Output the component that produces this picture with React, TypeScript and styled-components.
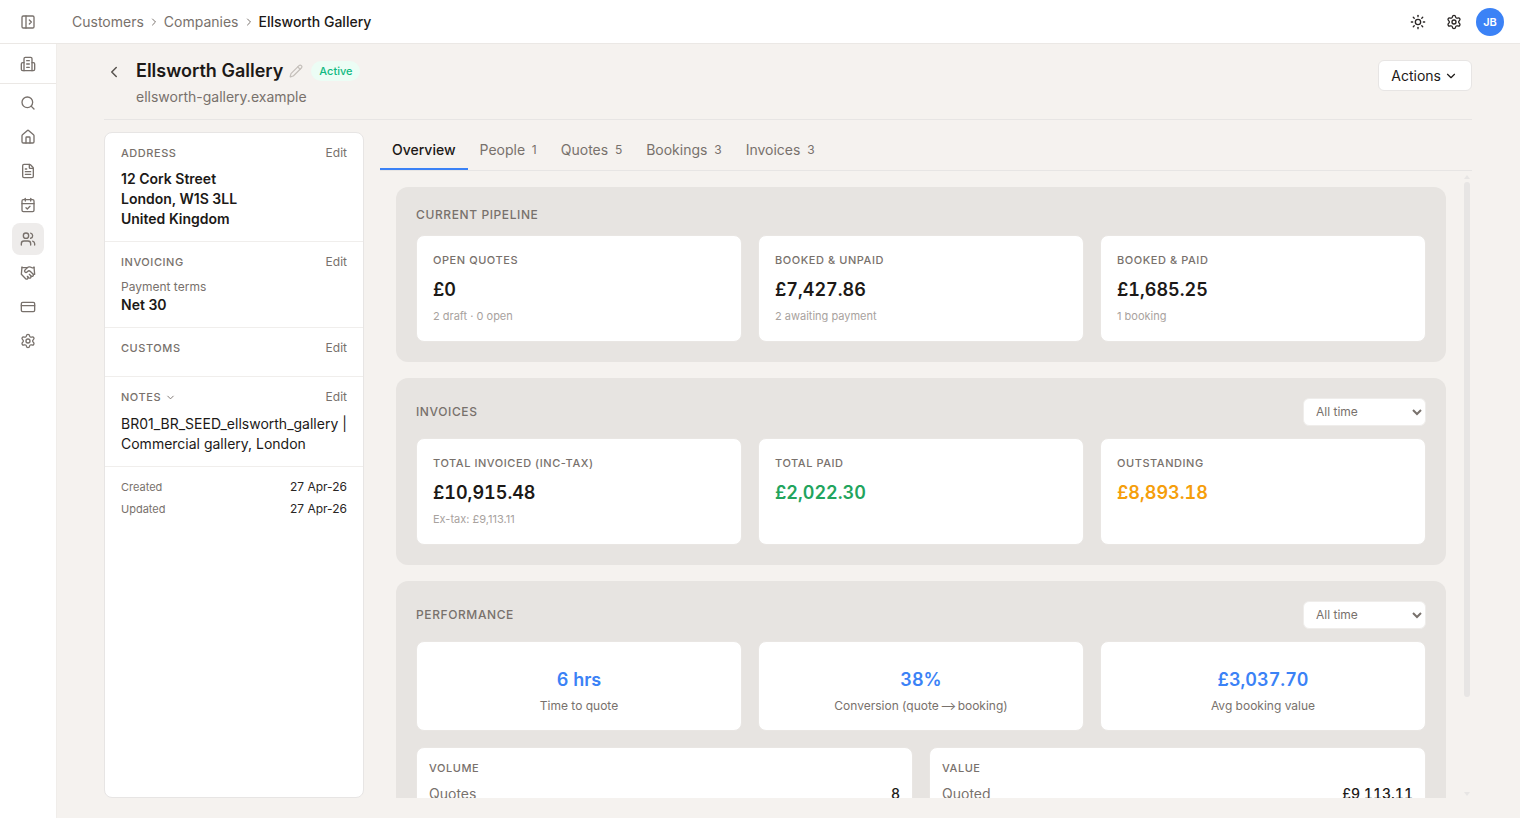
import React from 'react';
import styled, { createGlobalStyle } from 'styled-components';
import {
  CalendarCheck,
  ChevronDown,
  ChevronLeft,
  ChevronRight,
  CreditCard,
  FileText,
  Handshake,
  House,
  PanelLeftOpen,
  Pencil,
  Search,
  Settings,
  Sun,
  Users,
} from 'lucide-react';

const GlobalStyle = createGlobalStyle`
  html, body, #root {
    margin: 0;
    height: 100%;
  }
  body {
    font-family: Inter, "Liberation Sans", sans-serif;
    background: #f5f2ef;
    color: #1c1917;
    overflow: hidden;
  }
  * {
    box-sizing: border-box;
  }
`;

const Page = styled.div`
  display: flex;
  flex-direction: column;
  width: 1520px;
  height: 818px;
`;

const TopBar = styled.header`
  display: flex;
  align-items: center;
  flex: 0 0 44px;
  background: #fff;
  border-bottom: 1px solid #ebe8e5;
  padding-right: 16px;
`;

const ToggleSlot = styled.div`
  display: flex;
  align-items: center;
  justify-content: center;
  width: 56px;
  color: #78716c;
`;

const Crumbs = styled.nav`
  display: flex;
  align-items: center;
  gap: 4px;
  margin-left: 16px;
  font-size: 14px;
  color: #78716c;
  flex: 1;
`;

const CrumbSep = styled.span`
  display: flex;
  color: #78716c;
`;

const CrumbCurrent = styled.span`
  color: #1c1917;
  font-weight: 500;
`;

const TopActions = styled.div`
  display: flex;
  align-items: center;
  gap: 20px;
  color: #292524;
`;

const Avatar = styled.div`
  display: flex;
  align-items: center;
  justify-content: center;
  width: 28px;
  height: 28px;
  margin-left: -6px;
  border-radius: 50%;
  background: #3b82f6;
  color: #fff;
  font-size: 11px;
  font-weight: 600;
`;

const Body = styled.div`
  display: flex;
  flex: 1;
  min-height: 0;
`;

const Sidebar = styled.aside`
  display: flex;
  flex-direction: column;
  align-items: center;
  width: 57px;
  background: #fff;
  border-right: 1px solid #f0edea;
  color: #78716c;
`;

const BrandSlot = styled.div`
  display: flex;
  align-items: center;
  justify-content: center;
  width: 100%;
  height: 40px;
  border-bottom: 1px solid #ebe8e5;
  margin-bottom: 1px;
`;

const NavItem = styled.div<{ $active?: boolean }>`
  display: flex;
  align-items: center;
  justify-content: center;
  width: 32px;
  height: 32px;
  margin-top: 2px;
  border-radius: 8px;
  background: ${(p) => (p.$active ? '#eeeceb' : 'transparent')};
`;

const Main = styled.main`
  display: flex;
  flex-direction: column;
  flex: 1;
  min-width: 0;
  padding: 0 48px 20px 47px;
`;

const Header = styled.div`
  display: flex;
  justify-content: space-between;
  align-items: flex-start;
  height: 76px;
  flex: 0 0 76px;
  border-bottom: 1px solid #e7e5e4;
  margin-bottom: 12px;
  padding-top: 17px;
`;

const HeaderLeft = styled.div`
  display: flex;
  align-items: flex-start;
`;

const BackSlot = styled.div`
  display: flex;
  width: 32px;
  padding: 2px 0 0 1px;
  color: #57534e;
`;

const TitleRow = styled.div`
  display: flex;
  align-items: center;
  height: 20px;
`;

const Title = styled.h1`
  margin: 0;
  font-size: 18px;
  font-weight: 600;
  line-height: 20px;
`;

const EditPencil = styled.span`
  display: flex;
  margin-left: 6px;
  color: #c4bfba;
`;

const StatusBadge = styled.span`
  margin-left: 8px;
  padding: 2px 8px;
  border-radius: 10px;
  background: #ecfdf5;
  color: #10b981;
  font-size: 11px;
  font-weight: 500;
  line-height: 16px;
`;

const Domain = styled.div`
  margin-top: 6px;
  font-size: 14px;
  line-height: 20px;
  color: #78716c;
`;

const ActionsButton = styled.button`
  display: flex;
  align-items: center;
  gap: 3px;
  height: 31px;
  margin-top: -1px;
  padding: 0 13px 0 12px;
  border: 1px solid #e7e5e4;
  border-radius: 6px;
  background: #fff;
  color: #1c1917;
  font: 400 14px Inter, sans-serif;
`;

const Columns = styled.div`
  display: flex;
  gap: 16px;
  flex: 1;
  min-height: 0;
`;

const InfoCard = styled.section`
  flex: 0 0 260px;
  background: #fff;
  border: 1px solid #e7e5e4;
  border-radius: 8px;
  overflow: hidden;
`;

const InfoBlock = styled.div<{ $h: number }>`
  height: ${(p) => p.$h}px;
  padding: 13px 16px 0;
  border-bottom: 1px solid #f0eeec;
`;

const InfoHead = styled.div`
  display: flex;
  justify-content: space-between;
  align-items: center;
  height: 14px;
`;

const InfoLabel = styled.span`
  display: flex;
  align-items: center;
  gap: 4px;
  font-size: 11px;
  font-weight: 500;
  letter-spacing: 0.55px;
  color: #78716c;
`;

const EditLink = styled.span`
  margin-top: -2px;
  font-size: 12px;
  color: #78716c;
`;

const Address = styled.div`
  margin-top: 9px;
  font-size: 14px;
  font-weight: 600;
  line-height: 20px;
`;

const TermLabel = styled.div`
  margin-top: 10px;
  font-size: 12px;
  line-height: 16px;
  color: #78716c;
`;

const TermValue = styled.div`
  margin-top: 1px;
  font-size: 14px;
  font-weight: 600;
  line-height: 18px;
`;

const NoteText = styled.div`
  margin-top: 10px;
  font-size: 14px;
  line-height: 20px;
`;

const MetaBlock = styled.div`
  display: flex;
  flex-direction: column;
  gap: 6px;
  padding: 12px 16px;
`;

const MetaRow = styled.div`
  display: flex;
  justify-content: space-between;
  align-items: center;
  height: 16px;
  font-size: 12px;
  color: #292524;
`;

const MetaLabel = styled.span`
  font-size: 11px;
  color: #78716c;
`;

const MetaValue = styled.span`
  margin-top: -2px;
`;

const RightColumn = styled.div`
  position: relative;
  display: flex;
  flex-direction: column;
  flex: 1;
  min-width: 0;
`;

const Tabs = styled.div`
  display: flex;
  flex: 0 0 39px;
  height: 39px;
  border-bottom: 1px solid #e7e5e4;
`;

const Tab = styled.div<{ $active?: boolean }>`
  display: flex;
  align-items: center;
  gap: 6.75px;
  height: 38px;
  padding: 0 12px 2px;
  font-size: 14px;
  font-weight: ${(p) => (p.$active ? 500 : 400)};
  color: ${(p) => (p.$active ? '#1c1917' : '#78716c')};
  border-bottom: 2px solid ${(p) => (p.$active ? '#3b82f6' : 'transparent')};
`;

const TabCount = styled.span`
  font-size: 12px;
  color: #78716c;
`;

const ScrollArea = styled.div`
  display: flex;
  flex-direction: column;
  gap: 16px;
  flex: 1;
  min-height: 0;
  overflow: hidden;
  padding: 16px 26px 0 16px;
`;

const ScrollThumb = styled.div`
  position: absolute;
  right: 2px;
  top: 50px;
  width: 6px;
  height: 515px;
  border-radius: 3px;
  background: #e7e5e4;
`;

const ScrollArrow = styled.div<{ $up?: boolean }>`
  position: absolute;
  right: 2px;
  ${(p) => (p.$up ? 'top: 43px;' : 'bottom: 2px;')}
  width: 0;
  height: 0;
  border-left: 3px solid transparent;
  border-right: 3px solid transparent;
  border-${(p) => (p.$up ? 'bottom' : 'top')}: 4px solid #e7e5e4;
`;

const Panel = styled.section`
  flex: none;
  padding: 20px;
  border-radius: 12px;
  background: #e7e4e1;
`;

const PanelHead = styled.div`
  display: flex;
  justify-content: space-between;
  align-items: center;
  min-height: 16px;
  margin-bottom: 12px;
`;

const PanelTitle = styled.h2`
  margin: -2px 0 0;
  font-size: 12px;
  font-weight: 500;
  letter-spacing: 0.6px;
  color: #78716c;
`;

const RangeSelect = styled.select`
  width: 123px;
  height: 28px;
  padding: 0 8px 2px;
  border: 1px solid #efedeb;
  border-radius: 6px;
  background: #fff;
  color: #78716c;
  font: 400 12px Inter, sans-serif;
`;

const CardGrid = styled.div`
  display: grid;
  grid-template-columns: repeat(3, 1fr);
  gap: 16px;
`;

const StatCard = styled.div`
  height: 107px;
  padding: 16px 16px 0;
  border: 1px solid #e9e6e3;
  border-radius: 8px;
  background: #fff;
`;

const StatLabel = styled.div`
  font-size: 11px;
  font-weight: 500;
  letter-spacing: 0.55px;
  line-height: 16px;
  color: #78716c;
`;

const StatValue = styled.div<{ $tone?: string }>`
  margin-top: 8px;
  font-size: 18px;
  font-weight: 600;
  font-variant-numeric: tabular-nums;
  line-height: 28px;
  color: ${(p) => p.$tone || '#1c1917'};
`;

const StatNote = styled.div`
  margin-top: 4px;
  font-size: 11px;
  line-height: 16px;
  color: #a8a29e;
`;

const KpiCard = styled.div`
  display: flex;
  flex-direction: column;
  align-items: center;
  height: 90px;
  padding-top: 24px;
  border: 1px solid #e9e6e3;
  border-radius: 8px;
  background: #fff;
`;

const KpiValue = styled.div`
  font-size: 18px;
  font-weight: 600;
  font-variant-numeric: tabular-nums;
  line-height: 28px;
  color: #3b82f6;
`;

const KpiLabel = styled.div`
  margin-top: 4px;
  font-size: 12px;
  line-height: 16px;
  color: #78716c;
`;

const KpiArrow = styled.span`
  margin: 0 -2px;
`;

const SplitGrid = styled.div`
  display: grid;
  grid-template-columns: 1fr 1fr;
  gap: 16px;
  margin-top: 16px;
`;

const TableCard = styled.div`
  padding: 12px;
  border: 1px solid #e9e6e3;
  border-radius: 8px;
  background: #fff;
`;

const TableRow = styled.div`
  display: flex;
  justify-content: space-between;
  margin-top: 8px;
  font-size: 14px;
  line-height: 20px;
  color: #78716c;
`;

const TableValue = styled.span`
  font-weight: 500;
  font-variant-numeric: tabular-nums;
  color: #1c1917;
`;

const BrandIcon = () => (
  <svg width="16" height="16" viewBox="0 0 24 24" fill="none" stroke="currentColor" strokeWidth="2" strokeLinecap="round" strokeLinejoin="round">
    <path d="M6 22V4a2 2 0 0 1 2-2h8a2 2 0 0 1 2 2v18Z" />
    <path d="M6 10H4a2 2 0 0 0-2 2v8a2 2 0 0 0 2 2h2" />
    <path d="M18 10h2a2 2 0 0 1 2 2v8a2 2 0 0 1-2 2h-2" />
    <path d="M10 7h4" />
    <path d="M10 12h4" />
    <path d="M10 17h4" />
  </svg>
);

const navIcons = [Search, House, FileText, CalendarCheck, Users, Handshake, CreditCard, Settings];

const tabs = [
  { name: 'People', count: 1 },
  { name: 'Quotes', count: 5 },
  { name: 'Bookings', count: 3 },
  { name: 'Invoices', count: 3 },
];

export default function App() {
  return (
    <>
      <GlobalStyle />
      <Page>
        <TopBar>
          <ToggleSlot>
            <PanelLeftOpen size={16} />
          </ToggleSlot>
          <Crumbs>
            <span>Customers</span>
            <CrumbSep><ChevronRight size={12} /></CrumbSep>
            <span>Companies</span>
            <CrumbSep><ChevronRight size={12} /></CrumbSep>
            <CrumbCurrent>Ellsworth Gallery</CrumbCurrent>
          </Crumbs>
          <TopActions>
            <Sun size={16} />
            <Settings size={16} />
            <Avatar>JB</Avatar>
          </TopActions>
        </TopBar>
        <Body>
          <Sidebar>
            <BrandSlot>
              <BrandIcon />
            </BrandSlot>
            {navIcons.map((Icon, i) => (
              <NavItem key={i} $active={Icon === Users}>
                <Icon size={16} />
              </NavItem>
            ))}
          </Sidebar>
          <Main>
            <Header>
              <HeaderLeft>
                <BackSlot>
                  <ChevronLeft size={18} />
                </BackSlot>
                <div>
                  <TitleRow>
                    <Title>Ellsworth Gallery</Title>
                    <EditPencil><Pencil size={14} /></EditPencil>
                    <StatusBadge>Active</StatusBadge>
                  </TitleRow>
                  <Domain>ellsworth-gallery.example</Domain>
                </div>
              </HeaderLeft>
              <ActionsButton>
                Actions <ChevronDown size={14} />
              </ActionsButton>
            </Header>
            <Columns>
              <InfoCard>
                <InfoBlock $h={109}>
                  <InfoHead>
                    <InfoLabel>ADDRESS</InfoLabel>
                    <EditLink>Edit</EditLink>
                  </InfoHead>
                  <Address>
                    12 Cork Street
                    <br />
                    London, W1S 3LL
                    <br />
                    United Kingdom
                  </Address>
                </InfoBlock>
                <InfoBlock $h={86}>
                  <InfoHead>
                    <InfoLabel>INVOICING</InfoLabel>
                    <EditLink>Edit</EditLink>
                  </InfoHead>
                  <TermLabel>Payment terms</TermLabel>
                  <TermValue>Net 30</TermValue>
                </InfoBlock>
                <InfoBlock $h={49}>
                  <InfoHead>
                    <InfoLabel>CUSTOMS</InfoLabel>
                    <EditLink>Edit</EditLink>
                  </InfoHead>
                </InfoBlock>
                <InfoBlock $h={90}>
                  <InfoHead>
                    <InfoLabel>
                      NOTES <ChevronDown size={11} />
                    </InfoLabel>
                    <EditLink>Edit</EditLink>
                  </InfoHead>
                  <NoteText>BR01_BR_SEED_ellsworth_gallery | Commercial gallery, London</NoteText>
                </InfoBlock>
                <MetaBlock>
                  <MetaRow>
                    <MetaLabel>Created</MetaLabel>
                    <MetaValue>27 Apr-26</MetaValue>
                  </MetaRow>
                  <MetaRow>
                    <MetaLabel>Updated</MetaLabel>
                    <MetaValue>27 Apr-26</MetaValue>
                  </MetaRow>
                </MetaBlock>
              </InfoCard>
              <RightColumn>
                <Tabs>
                  <Tab $active>Overview</Tab>
                  {tabs.map((t) => (
                    <Tab key={t.name}>
                      {t.name} <TabCount>{t.count}</TabCount>
                    </Tab>
                  ))}
                </Tabs>
                <ScrollArea>
                  <Panel>
                    <PanelHead>
                      <PanelTitle>CURRENT PIPELINE</PanelTitle>
                    </PanelHead>
                    <CardGrid>
                      <StatCard>
                        <StatLabel>OPEN QUOTES</StatLabel>
                        <StatValue>£0</StatValue>
                        <StatNote>2 draft · 0 open</StatNote>
                      </StatCard>
                      <StatCard>
                        <StatLabel>BOOKED &amp; UNPAID</StatLabel>
                        <StatValue>£7,427.86</StatValue>
                        <StatNote>2 awaiting payment</StatNote>
                      </StatCard>
                      <StatCard>
                        <StatLabel>BOOKED &amp; PAID</StatLabel>
                        <StatValue>£1,685.25</StatValue>
                        <StatNote>1 booking</StatNote>
                      </StatCard>
                    </CardGrid>
                  </Panel>
                  <Panel>
                    <PanelHead>
                      <PanelTitle>INVOICES</PanelTitle>
                      <RangeSelect defaultValue="all">
                        <option value="all">All time</option>
                      </RangeSelect>
                    </PanelHead>
                    <CardGrid>
                      <StatCard>
                        <StatLabel>TOTAL INVOICED (INC-TAX)</StatLabel>
                        <StatValue>£10,915.48</StatValue>
                        <StatNote>Ex-tax: £9,113.11</StatNote>
                      </StatCard>
                      <StatCard>
                        <StatLabel>TOTAL PAID</StatLabel>
                        <StatValue $tone="#22a45d">£2,022.30</StatValue>
                      </StatCard>
                      <StatCard>
                        <StatLabel>OUTSTANDING</StatLabel>
                        <StatValue $tone="#f59e0b">£8,893.18</StatValue>
                      </StatCard>
                    </CardGrid>
                  </Panel>
                  <Panel>
                    <PanelHead>
                      <PanelTitle>PERFORMANCE</PanelTitle>
                      <RangeSelect defaultValue="all">
                        <option value="all">All time</option>
                      </RangeSelect>
                    </PanelHead>
                    <CardGrid>
                      <KpiCard>
                        <KpiValue>6 hrs</KpiValue>
                        <KpiLabel>Time to quote</KpiLabel>
                      </KpiCard>
                      <KpiCard>
                        <KpiValue>38%</KpiValue>
                        <KpiLabel>Conversion (quote <KpiArrow>⟶</KpiArrow> booking)</KpiLabel>
                      </KpiCard>
                      <KpiCard>
                        <KpiValue>£3,037.70</KpiValue>
                        <KpiLabel>Avg booking value</KpiLabel>
                      </KpiCard>
                    </CardGrid>
                    <SplitGrid>
                      <TableCard>
                        <StatLabel>VOLUME</StatLabel>
                        <TableRow>
                          <span>Quotes</span>
                          <TableValue>8</TableValue>
                        </TableRow>
                      </TableCard>
                      <TableCard>
                        <StatLabel>VALUE</StatLabel>
                        <TableRow>
                          <span>Quoted</span>
                          <TableValue>£9,113.11</TableValue>
                        </TableRow>
                      </TableCard>
                    </SplitGrid>
                  </Panel>
                </ScrollArea>
                <ScrollArrow $up />
                <ScrollThumb />
                <ScrollArrow />
              </RightColumn>
            </Columns>
          </Main>
        </Body>
      </Page>
    </>
  );
}
